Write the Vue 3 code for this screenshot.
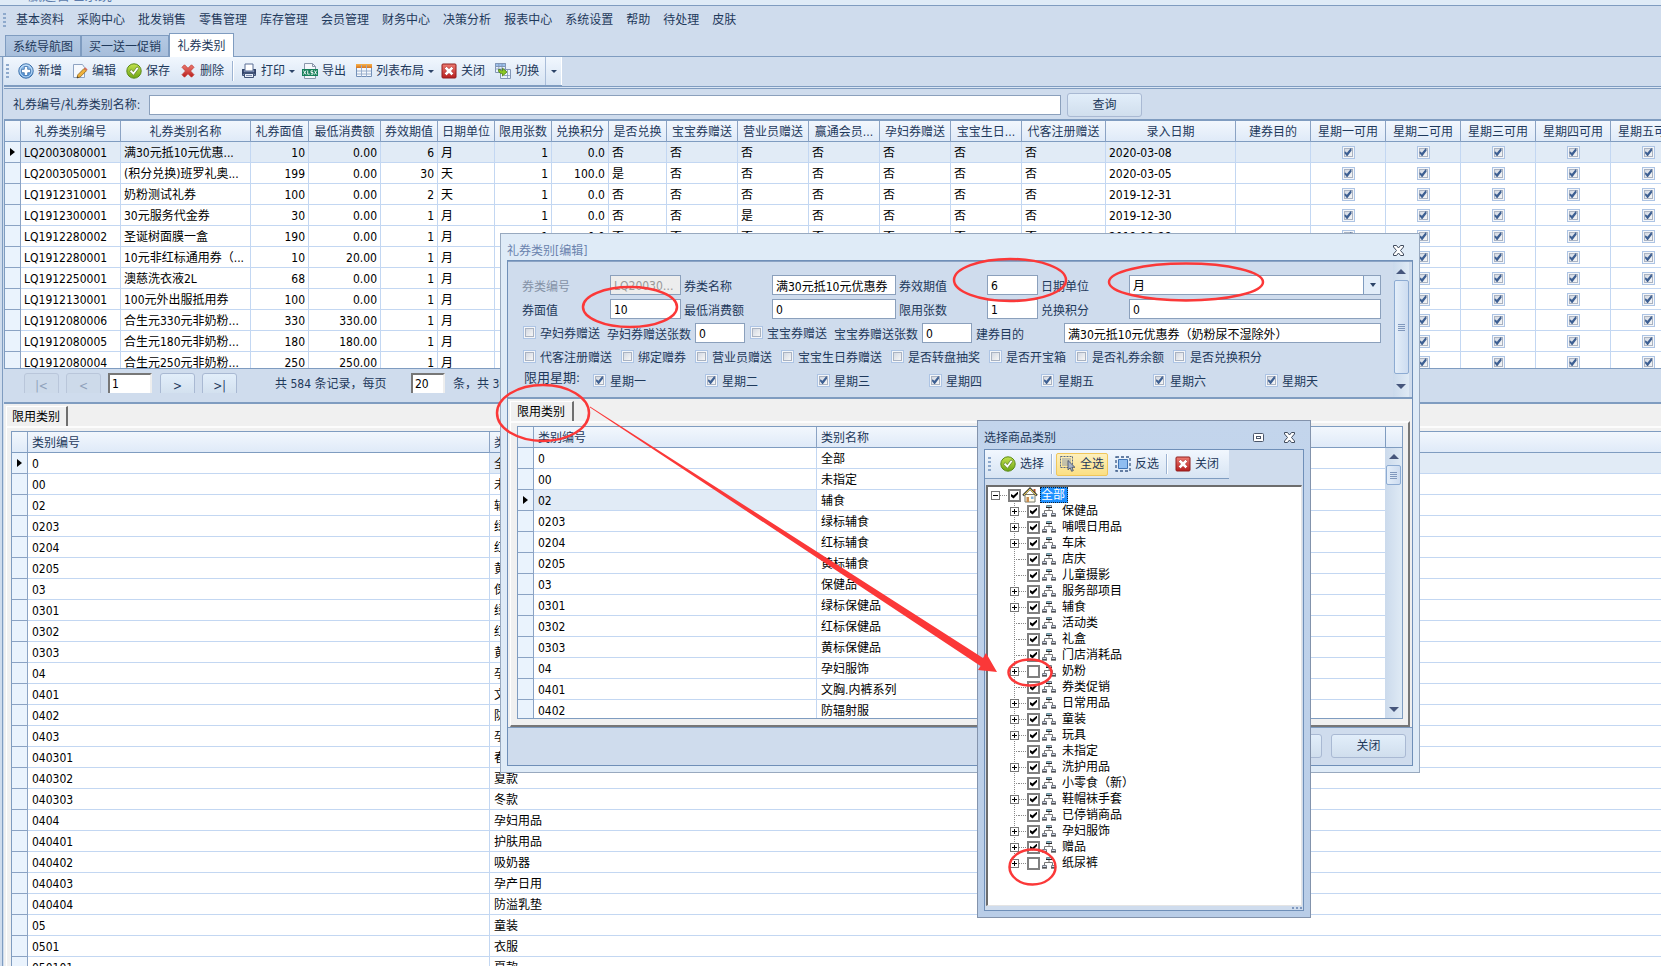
<script setup>
import { ref } from 'vue'

const menus = ['基本资料', '采购中心', '批发销售', '零售管理', '库存管理', '会员管理', '财务中心', '决策分析', '报表中心', '系统设置', '帮助', '待处理', '皮肤']

const columns = [
  { t: '礼券类别编号', w: 100 }, { t: '礼券类别名称', w: 130 }, { t: '礼券面值', w: 58, r: 1 },
  { t: '最低消费额', w: 72, r: 1 }, { t: '券效期值', w: 57, r: 1 }, { t: '日期单位', w: 57 },
  { t: '限用张数', w: 57, r: 1 }, { t: '兑换积分', w: 57, r: 1 }, { t: '是否兑换', w: 58 },
  { t: '宝宝券赠送', w: 71 }, { t: '营业员赠送', w: 71 }, { t: '赢通会员...', w: 71 },
  { t: '孕妇券赠送', w: 71 }, { t: '宝宝生日...', w: 71 }, { t: '代客注册赠送', w: 84 },
  { t: '录入日期', w: 130 }, { t: '建券目的', w: 75 }
]
const weekCols = ['一', '二', '三', '四', '五']

const mk = (id, name, value, min, span, unit, points, exch, staff, date) =>
  [id, name, value, min, span, unit, '1', points, exch, '否', staff, '否', '否', '否', '否', date, '']
const coupons = [
  mk('LQ2003080001', '满30元抵10元优惠...', '10', '0.00', '6', '月', '0.0', '否', '否', '2020-03-08'),
  mk('LQ2003050001', '(积分兑换)班罗礼奥...', '199', '0.00', '30', '天', '100.0', '是', '否', '2020-03-05'),
  mk('LQ1912310001', '奶粉测试礼券', '100', '0.00', '2', '天', '0.0', '否', '否', '2019-12-31'),
  mk('LQ1912300001', '30元服务代金券', '30', '0.00', '1', '月', '0.0', '否', '是', '2019-12-30'),
  mk('LQ1912280002', '圣诞树面膜一盒', '190', '0.00', '1', '月', '0.0', '否', '否', '2019-12-28'),
  mk('LQ1912280001', '10元非红标通用券（...', '10', '20.00', '1', '月', '0.0', '否', '否', '2019-12-28'),
  mk('LQ1912250001', '澳慈洗衣液2L', '68', '0.00', '1', '月', '0.0', '否', '否', '2019-12-25'),
  mk('LQ1912130001', '100元外出服抵用券', '100', '0.00', '1', '月', '0.0', '否', '否', '2019-12-13'),
  mk('LQ1912080006', '合生元330元非奶粉...', '330', '330.00', '1', '月', '0.0', '否', '否', '2019-12-08'),
  mk('LQ1912080005', '合生元180元非奶粉...', '180', '180.00', '1', '月', '0.0', '否', '否', '2019-12-08'),
  mk('LQ1912080004', '合生元250元非奶粉...', '250', '250.00', '1', '月', '0.0', '否', '否', '2019-12-08')
]

const categories = [
  ['0', '全部'], ['00', '未指定'], ['02', '辅食'], ['0203', '绿标辅食'], ['0204', '红标辅食'],
  ['0205', '黄标辅食'], ['03', '保健品'], ['0301', '绿标保健品'], ['0302', '红标保健品'],
  ['0303', '黄标保健品'], ['04', '孕妇服饰'], ['0401', '文胸.内裤系列'], ['0402', '防辐射服'],
  ['0403', '孕妇装'], ['040301', '春款'], ['040302', '夏款'], ['040303', '冬款'],
  ['0404', '孕妇用品'], ['040401', '护肤用品'], ['040402', '吸奶器'], ['040403', '孕产日用'],
  ['040404', '防溢乳垫'], ['05', '童装'], ['0501', '衣服'], ['050101', '夏款']
]

const flags = ['代客注册赠送', '绑定赠券', '营业员赠送', '宝宝生日券赠送', '是否转盘抽奖', '是否开宝箱', '是否礼券余额', '是否兑换积分']
const days = ['星期一', '星期二', '星期三', '星期四', '星期五', '星期六', '星期天']

const tree = ref([
  ['保健品', 1, 1], ['哺喂日用品', 1, 1], ['车床', 1, 1], ['店庆', 0, 1], ['儿童摄影', 0, 1],
  ['服务部项目', 1, 1], ['辅食', 1, 1], ['活动类', 0, 1], ['礼盒', 0, 1], ['门店消耗品', 0, 1],
  ['奶粉', 1, 0], ['券类促销', 0, 1], ['日常用品', 1, 1], ['童装', 1, 1], ['玩具', 1, 1],
  ['未指定', 0, 1], ['洗护用品', 1, 1], ['小零食（新）', 0, 1], ['鞋帽袜手套', 1, 1],
  ['已停销商品', 0, 1], ['孕妇服饰', 1, 1], ['赠品', 1, 1], ['纸尿裤', 1, 0]
].map(([name, kids, on]) => ({ name, kids: !!kids, on: !!on })))
</script>

<template>
  <div class="app">
    <svg class="defs" aria-hidden="true">
      <defs>
        <linearGradient id="gBlue" x1="0" y1="0" x2="0" y2="1"><stop offset="0" stop-color="#a9d0f5" /><stop offset="1" stop-color="#3f86cf" /></linearGradient>
        <linearGradient id="gGreen" x1="0" y1="0" x2="0" y2="1"><stop offset="0" stop-color="#c3e24e" /><stop offset="1" stop-color="#6fa514" /></linearGradient>
        <linearGradient id="gRed" x1="0" y1="0" x2="0" y2="1"><stop offset="0" stop-color="#ee7c72" /><stop offset="1" stop-color="#b81d1d" /></linearGradient>
        <linearGradient id="gOrange" x1="0" y1="0" x2="0" y2="1"><stop offset="0" stop-color="#f7b34c" /><stop offset="1" stop-color="#d9741c" /></linearGradient>
      </defs>
      <symbol id="i-add" viewBox="0 0 16 16"><circle cx="8" cy="8" r="7.2" fill="url(#gBlue)" stroke="#3a6ea8" /><circle cx="8" cy="8" r="6" fill="none" stroke="#d5e8fa" stroke-width=".8" /><path d="M6.3 3.5h3.4v2.8h2.8v3.4H9.7v2.8H6.3V9.700H3.500V6.300h2.800z" fill="#fff" stroke="#3a6ea8" stroke-width=".8" /></symbol>
      <symbol id="i-edit" viewBox="0 0 16 16"><path d="M1.500 1.500h9l2 3v10h-11z" fill="#f6f9fd" stroke="#8ea3c2" /><path d="M5 15l.8-3.200L12 5.500l2.500 2.200L8.200 14z" fill="#f0b23a" stroke="#8a6420" stroke-width=".8" /><path d="M12 5.500l1.200-1.200 2.400 2.200-1.100 1.200z" fill="#d86a5c" /><path d="M5 15l.5-1.800 1.300 1.200z" fill="#333" /></symbol>
      <symbol id="i-ok" viewBox="0 0 16 16"><circle cx="8" cy="8" r="7.2" fill="url(#gGreen)" stroke="#5a8a17" /><path d="M3.500 8.200l1.800-1.700 2 2.200 3.600-4.900 2 1.500-5.400 7.100z" fill="#fff" stroke="#5f7f2b" stroke-width=".8" /></symbol>
      <symbol id="i-del" viewBox="0 0 16 16"><path d="M2 4.300L4.500 1.800 8 5.300l3.500-3.500L14 4.300 10.500 8l3.500 3.700-2.500 2.500L8 10.700l-3.500 3.500L2 11.700 5.500 8z" fill="url(#gRed)" stroke="#c03830" stroke-width=".8" /></symbol>
      <symbol id="i-print" viewBox="0 0 16 16"><path d="M1.500 6.500h13v6h-13z" fill="#7d8eb0" stroke="#3f5275" /><path d="M4 1h8v7H4z" fill="#fff" stroke="#5a6f96" /><path d="M2 6v4h12V6" fill="none" stroke="#2c3e63" stroke-width="1.500" /><path d="M3.500 10.500h9v4h-9z" fill="#e8eef8" stroke="#3f5275" /><path d="M5 12.500h6" stroke="#7d8eb0" /></symbol>
      <symbol id="i-xls" viewBox="0 0 16 16"><path d="M2.500.5h8l3 3v12h-11z" fill="#f4f7fb" stroke="#8a97ab" /><path d="M10.500.5v3h3" fill="none" stroke="#8a97ab" /><path d="M0 6h16v7H0z" fill="#16805a" /><path d="M1.500 7.500l2.500 4m0-4l-2.500 4M5.700 7.500v3.700h2M11 7.800H9v1.700h2v1.700H8.800M12.400 7.500l2.300 4m0-4l-2.300 4" stroke="#fff" fill="none" stroke-width=".9" /></symbol>
      <symbol id="i-grid" viewBox="0 0 16 16"><path d="M.5 2.500h15v11H.5z" fill="#f5f8fc" stroke="#7390b8" /><path d="M0 1h16v4H0z" fill="url(#gOrange)" /><path d="M5.500 2v12M10.500 2v12M1 8h14M1 11h14" stroke="#93a9c9" stroke-width=".9" /></symbol>
      <symbol id="i-close" viewBox="0 0 16 16"><rect x="1" y="1" width="14" height="14" rx="1" fill="url(#gRed)" stroke="#8f1f1f" /><path d="M3.500 5.500l2-2L8 5.700l2.500-2.200 2 2L10.300 8l2.200 2.500-2 2L8 10.300l-2.500 2.200-2-2L5.700 8z" fill="#fff" stroke="#a53030" stroke-width=".5" /></symbol>
      <symbol id="i-switch" viewBox="0 0 16 16"><path d="M.5.5h10v9H.5zM5.500 6.500h10v9h-10z" fill="#eaf2fb" stroke="#8296b6" /><path d="M.5.5h10v3H.5z" fill="#9cc0ea" stroke="#8296b6" /><path d="M3.800 1v8M7 1v8M1 6h9M8.800 12.500h6M12.500 7v8" stroke="#8296b6" stroke-width=".8" /><path d="M3.500 6.500c0 3 1.500 4 4 4v2.500l4.500-4-4.500-3.800v2.600c-1.500 0-2.200-.3-2.200-1.300z" fill="#8cc824" stroke="#4d7d12" stroke-width=".8" /></symbol>
      <symbol id="i-all" viewBox="0 0 16 16"><path d="M.5.5h12v11H.5z" fill="none" stroke="#5b6b83" stroke-dasharray="2 1" /><path d="M2 3h9M2 5h9M2 7h9M2 9h7" stroke="#8b99ad" /><path d="M8 4.500v9.300l2.200-1.900 1.400 3.400 1.700-.7-1.400-3.300h3z" fill="#a9b4c6" stroke="#3c4962" stroke-width=".8" /></symbol>
      <symbol id="i-inv" viewBox="0 0 16 16"><path d="M1 1h14v14H1z" fill="none" stroke="#3b5a86" stroke-width="1.300" stroke-dasharray="3 2" /><path d="M3.500 3.500h9v9h-9z" fill="#8fbdf0" stroke="#3f74b5" /></symbol>
      <symbol id="i-home" viewBox="0 0 16 16"><path d="M11.500 2h2v4h-2z" fill="#b5532c" /><path d="M3 7.500h10v7.500H3z" fill="#fffbe8" stroke="#77786a" /><path d="M1 8.500L8 1.500l7 7" fill="none" stroke="#4a4a3c" stroke-width="2.200" /><path d="M2 8l6-6 6 6" fill="none" stroke="#e8c648" stroke-width="1" /><path d="M4.500 10h2.500v5H4.500z" fill="#c98c4c" /><path d="M9 9.500h2.500v2.500H9z" fill="#7fb0e0" /></symbol>
      <symbol id="i-org" viewBox="0 0 16 14"><path d="M8 3.500v3M3.500 10V6.500h8V10" fill="none" stroke="#777" /><path d="M5.500 1.500h5v2h-5zM1.500 9.500h4v2h-4zM10.500 9.500h4v2h-4z" fill="#d3dbe6" stroke="#777c88" /><path d="M5 3.500h6M1 12h5M10 12h5" stroke="#222" /><path d="M6 2h3" stroke="#4aa0b0" /></symbol>
      <symbol id="i-x" viewBox="0 0 11 11"><path d="M.5.5h3l2 2.500 2-2.500h3v1.500L7.500 5.500l3 3.500v1.500h-3l-2-2.500-2 2.500h-3V9l3-3.500-3-3.500z" fill="#fff" stroke="#3f4a5c" /></symbol>
      <symbol id="i-max" viewBox="0 0 12 10"><rect x=".5" y=".5" width="10" height="8" rx="1" fill="#fff" stroke="#4b566a" /><rect x="3.500" y="3.500" width="4" height="2" fill="#fff" stroke="#4b566a" /></symbol>
    </svg>

    <header class="titlebar"><span>赢通管理系统</span></header>
    <nav class="menu">
      <i class="grip"></i>
      <a v-for="m in menus" :key="m" href="#">{{ m }}</a>
    </nav>
    <div class="tabs">
      <button class="t1">系统导航图</button><button class="t2">买一送一促销</button><button class="t3 on">礼券类别</button>
    </div>

    <main class="body">
      <div class="toolbar main-bar">
        <i class="grip"></i>
        <button class="tb"><svg><use href="#i-add" /></svg>新增</button>
        <button class="tb"><svg><use href="#i-edit" /></svg>编辑</button>
        <button class="tb"><svg><use href="#i-ok" /></svg>保存</button>
        <button class="tb"><svg><use href="#i-del" /></svg>删除</button>
        <i class="sep"></i>
        <button class="tb caret"><svg><use href="#i-print" /></svg>打印</button>
        <button class="tb"><svg><use href="#i-xls" /></svg>导出</button>
        <button class="tb caret"><svg><use href="#i-grid" /></svg>列表布局</button>
        <button class="tb"><svg><use href="#i-close" /></svg>关闭</button>
        <button class="tb"><svg><use href="#i-switch" /></svg>切换</button>
        <button class="more" aria-label="更多"></button>
      </div>

      <form class="query" @submit.prevent>
        <label for="q">礼券编号/礼券类别名称:</label>
        <input id="q" type="text" class="box" />
        <button class="btn">查询</button>
      </form>

      <div class="grid-top">
        <table class="grid fixed">
          <colgroup>
            <col class="c-ind" />
            <col v-for="c in columns" :key="c.t" :style="{ width: c.w + 'px' }" />
            <col v-for="w in weekCols" :key="w" class="c-week" />
          </colgroup>
          <thead>
            <tr>
              <th></th>
              <th v-for="c in columns" :key="c.t">{{ c.t }}</th>
              <th v-for="w in weekCols" :key="w">星期{{ w }}可用</th>
            </tr>
          </thead>
          <tbody>
            <tr v-for="(row, i) in coupons" :key="row[0]" :class="{ sel: i === 0 }">
              <td class="ind"><i v-if="i === 0" class="cur"></i></td>
              <td v-for="(v, k) in row" :key="k" :class="{ r: columns[k].r }">{{ v }}</td>
              <td v-for="w in weekCols" :key="w" class="c"><input type="checkbox" class="ck" checked :aria-label="'星期' + w + '可用'" /></td>
            </tr>
          </tbody>
        </table>
      </div>

      <div class="pager">
        <div class="pager-in">
          <button class="btn" disabled>|&lt;</button>
          <button class="btn" disabled>&lt;</button>
          <input class="sunk" type="text" value="1" aria-label="页码" />
          <button class="btn">&gt;</button>
          <button class="btn">&gt;|</button>
          <span class="total">共 584 条记录，每页</span>
          <input class="sunk small" type="text" value="20" aria-label="每页条数" />
          <span>条，共 30 页</span>
        </div>
      </div>

      <section class="tabzone lower">
        <div class="strip"><button class="ptab">限用类别</button></div>
        <div class="page">
          <div class="frame">
            <table class="grid wide">
              <colgroup><col class="c-ind" /><col class="c-id" /><col /></colgroup>
              <thead><tr><th></th><th class="l">类别编号</th><th class="l">类别名称</th></tr></thead>
              <tbody>
                <tr v-for="(c, i) in categories" :key="c[0]">
                  <td class="ind"><i v-if="i === 0" class="cur"></i></td>
                  <td>{{ c[0] }}</td>
                  <td :class="{ hot: i === 0 }">{{ c[1] }}</td>
                </tr>
              </tbody>
            </table>
          </div>
        </div>
      </section>
    </main>

    <section class="dlg edit" role="dialog" aria-label="礼券类别[编辑]">
      <div class="cap"><span>礼券类别[编辑]</span><button class="cx" aria-label="关闭窗口"><svg width="11" height="11"><use href="#i-x" /></svg></button></div>
      <div class="inner">
        <div class="formwrap">
          <div class="form">
            <div class="row">
              <label class="f fa dis"><span>券类编号</span><input class="box" disabled value="LQ2003080001" /></label>
              <label class="f fb"><span>券类名称</span><input class="box" value="满30元抵10元优惠券" /></label>
              <label class="f fc"><span>券效期值</span><input class="box" value="6" /></label>
              <label class="f fd"><span>日期单位</span><select class="box"><option>月</option><option>天</option></select></label>
            </div>
            <div class="row">
              <label class="f fa"><span>券面值</span><input class="box" value="10" /></label>
              <label class="f fb"><span>最低消费额</span><input class="box" value="0" /></label>
              <label class="f fc"><span>限用张数</span><input class="box" value="1" /></label>
              <label class="f fd"><span>兑换积分</span><input class="box" value="0" /></label>
            </div>
            <div class="row tight">
              <label class="chk"><input type="checkbox" class="ck" />孕妇券赠送</label>
              <label class="n"><span>孕妇券赠送张数</span><input class="box" value="0" /></label>
              <label class="chk"><input type="checkbox" class="ck" />宝宝券赠送</label>
              <label class="n"><span>宝宝券赠送张数</span><input class="box" value="0" /></label>
              <label class="f fd"><span>建券目的</span><input class="box" value="满30元抵10元优惠券（奶粉尿不湿除外）" /></label>
            </div>
            <div class="row flags">
              <label v-for="f in flags" :key="f" class="chk"><input type="checkbox" class="ck" />{{ f }}</label>
            </div>
            <div class="row days">
              <span class="dl">限用星期:</span>
              <label v-for="d in days" :key="d" class="chk"><input type="checkbox" class="ck" checked />{{ d }}</label>
            </div>
          </div>
          <div class="sb"><i class="up"></i><b class="thumb tall"></b><i class="down"></i></div>
        </div>
        <div class="tabzone">
          <div class="strip"><button class="ptab">限用类别</button></div>
          <div class="page closed">
            <div class="frame split">
              <div class="clip">
                <table class="grid wide">
                  <colgroup><col class="c-ind" /><col class="c-id2" /><col /></colgroup>
                  <thead><tr><th></th><th class="l">类别编号</th><th class="l">类别名称</th></tr></thead>
                  <tbody>
                    <tr v-for="(c, i) in categories.slice(0, 13)" :key="c[0]">
                      <td class="ind"><i v-if="i === 2" class="cur"></i></td>
                      <td :class="{ hot: i === 2 }">{{ c[0] }}</td>
                      <td>{{ c[1] }}</td>
                    </tr>
                  </tbody>
                </table>
              </div>
              <div class="sbcol">
                <div class="sbhead"></div>
                <div class="sb"><i class="up"></i><b class="thumb"></b><i class="down"></i></div>
              </div>
            </div>
          </div>
        </div>
        <div class="foot"><button class="btn" aria-label="保存"></button><button class="btn">关闭</button></div>
      </div>
    </section>

    <section class="dlg pick" role="dialog" aria-label="选择商品类别">
      <div class="cap">
        <span>选择商品类别</span>
        <button class="cx mx" aria-label="最大化"><svg width="12" height="10"><use href="#i-max" /></svg></button>
        <button class="cx" aria-label="关闭窗口"><svg width="11" height="11"><use href="#i-x" /></svg></button>
      </div>
      <div class="inner">
        <div class="toolbar pick-bar">
          <i class="grip"></i>
          <button class="tb"><svg><use href="#i-ok" /></svg>选择</button>
          <i class="sep"></i>
          <button class="tb hot"><svg><use href="#i-all" /></svg>全选</button>
          <button class="tb"><svg><use href="#i-inv" /></svg>反选</button>
          <i class="sep"></i>
          <button class="tb"><svg><use href="#i-close" /></svg>关闭</button>
        </div>
        <div class="tree">
          <label class="root"><i class="ex"></i><i class="dash"></i><input type="checkbox" class="tk" checked /><svg width="16" height="16"><use href="#i-home" /></svg><span>全部</span></label>
          <ul>
            <li v-for="n in tree" :key="n.name">
              <label><i v-if="n.kids" class="ex plus"></i><i v-else class="ex none"></i><i class="dash"></i><input v-model="n.on" type="checkbox" class="tk" /><svg width="16" height="14"><use href="#i-org" /></svg><span>{{ n.name }}</span></label>
            </li>
          </ul>
        </div>
        <div class="status"><i></i><i></i><i></i></div>
      </div>
    </section>

    <svg class="marks" width="1661" height="966" viewBox="0 0 1661 966" aria-hidden="true">
      <g fill="none" stroke="#fb3838" stroke-width="2.500">
        <ellipse cx="630" cy="307" rx="47" ry="20" />
        <ellipse cx="1010" cy="280" rx="56" ry="21" />
        <ellipse cx="1186" cy="282" rx="77" ry="18.500" />
        <ellipse cx="543" cy="413" rx="46" ry="28" />
        <ellipse cx="1030" cy="672.500" rx="21.500" ry="13" />
        <ellipse cx="1032.500" cy="867" rx="23" ry="17.500" />
      </g>
      <path d="M590 406.500L983 658l3-5 11 19-19-2 2.500-4L590 407.500z" fill="#fb3838" />
    </svg>
  </div>
</template>

<style>
html, body { margin: 0; height: 100%; overflow: hidden; }
#app { height: 100%; }
</style>

<style scoped>
.app { position: relative; display: flex; flex-direction: column; height: 100vh; overflow: hidden; background: #cfdced; color: #1e395b; font: 12px/16px "DejaVu Sans Condensed", "Noto Sans CJK SC", sans-serif; white-space: nowrap; }
.app *, .app *::before, .app *::after { box-sizing: border-box; }
button, input, select { font: inherit; color: inherit; margin: 0; padding: 0; border: 0; background: none; border-radius: 0; outline: 0; }
i, b { display: block; flex: none; font-style: normal; }
.defs { position: absolute; width: 0; height: 0; }
.titlebar { flex: none; display: flex; align-items: flex-end; height: 6px; overflow: hidden; background: #dfebf7; border-bottom: 1px solid #7f9cc0; padding: 0 0 2px 28px; font-size: 14px; color: #5d7bab; }
.titlebar span { line-height: 16px; }
.grip { width: 3px; height: 14px; background: repeating-linear-gradient(#8ea9cc 0 2px, transparent 2px 4px); }
.menu { flex: none; display: flex; align-items: center; height: 27px; padding-left: 3px; }
.menu a { color: #1e395b; text-decoration: none; margin-left: 13px; }
.menu .grip + a { margin-left: 10px; }
.tabs { flex: none; display: flex; align-items: flex-end; height: 24px; padding-left: 5px; border-bottom: 1px solid #7f9cc0; }
.tabs button { height: 21px; padding-top: 2px; border: 1px solid #7f9cc0; border-bottom: 0; background: linear-gradient(#b4c9e3, #a7bedb); text-align: center; }
.tabs .t1 { width: 76px; }
.tabs .t2 { width: 88px; }
.tabs .t3 { width: 65px; height: 24px; margin-bottom: -1px; padding-top: 0; background: #fff; }

.body { flex: 1; min-height: 0; display: flex; flex-direction: column; margin-left: 2px; border-left: 1px solid #7f9cc0; padding-left: 1px; }
.toolbar { flex: none; display: flex; align-items: center; align-self: flex-start; height: 29px; padding-left: 2px; border-bottom: 1px solid #7f9cc0; background: linear-gradient(#f1f7fe, #d7e4f3); }
.tb { display: flex; align-items: center; gap: 4px; height: 23px; padding: 0 4px; }
.tb svg { width: 16px; height: 16px; flex: none; }
.main-bar .tb { margin-right: 2px; }
.main-bar .grip + .tb { margin-left: 5px; }
.main-bar .tb.caret { padding-right: 2px; margin-right: 1px; }
.sep { width: 2px; height: 20px; background: linear-gradient(90deg, #9cb3d2 50%, #fff 50%); }
.caret::after, .more::after { content: ""; border: 3px solid transparent; border-top-color: #2c4468; border-bottom: 0; }
.main-bar .sep { margin: 0 3px 0 2px; }
.more { align-self: stretch; width: 17px; border-left: 1px solid #a9bdd9; border-right: 1px solid #fff; display: flex; align-items: center; justify-content: center; }
.box { height: 20px; border: 1px solid #8ba0bc; background: #fff; color: #000; padding: 1px 3px 0; min-width: 0; }
.btn { height: 24px; border: 1px solid #a9b9d3; border-radius: 3px; background: linear-gradient(#e2eefa, #d0deed); text-align: center; }
.query { flex: none; display: flex; align-items: center; height: 33px; padding: 3px 0 0 9px; border-top: 1px solid #7f9cc0; box-shadow: inset 0 1px 0 #dbe6f4, inset 0 2px 0 #7f9cc0; }
.query label { width: 136px; }
.query .box { width: 912px; }
.query .btn { width: 75px; margin-left: 6px; }

.grid-top { flex: none; height: 250px; overflow: hidden; border: 1px solid #7f9cc0; border-top-width: 2px; border-right: 0; background: #fff; }
.grid { width: 100%; border-collapse: separate; border-spacing: 0; table-layout: fixed; background: #fff; color: #000; }
.grid.fixed { width: 1681px; }
.c-ind { width: 16px; }
.c-week { width: 75px; }
.c-id { width: 462px; }
.c-id2 { width: 283px; }
.grid th { height: 21px; padding: 2px 0 0; font-weight: normal; color: #1e395b; text-align: center; background: linear-gradient(#f2f7fd, #dfeaf8); border-right: 1px solid #8ba3c4; border-bottom: 1px solid #7f9cc0; overflow: hidden; }
.grid th.l { text-align: left; padding-left: 4px; }
.grid th.l:last-child { border-right: 0; }
.grid td { height: 21px; padding: 3px 3px 1px; line-height: 16px; border-right: 1px solid #c3d7f2; border-bottom: 1px solid #c3d7f2; overflow: hidden; }
.grid.wide td { padding-left: 4px; }
.grid td:last-child { border-right: 0; }
.grid td.r { text-align: right; }
.grid td.c { text-align: center; line-height: 0; padding: 0; }
.grid td.ind { padding: 0; background: #eaf3fd; border-color: #8ba3c4; }
.grid .sel td:not(.ind), .grid td.hot { background: #e1ebf6; }
.cur { margin: 0 auto; width: 5px; height: 8px; background: #000; clip-path: polygon(0 0, 100% 50%, 0 100%); }

.ck { appearance: none; flex: none; position: relative; width: 13px; height: 13px; border: 1px solid #adc4e4; background: #f4f6f9; }
.ck::before { content: ""; position: absolute; inset: 1px; border: 1px solid #aab3c2; background: linear-gradient(135deg, #d3d9e3, #f6f6f6); }
.ck:checked::after { content: ""; position: absolute; inset: 1px; background: #3d5f92; clip-path: polygon(15% 42%, 38% 58%, 84% 2%, 90% 32%, 44% 95%, 36% 95%, 10% 62%); }

.pager { flex: none; height: 35px; border-bottom: 2px solid #7f9cc0; }
.pager-in { display: flex; align-items: flex-start; height: 24px; padding: 4px 0 0 20px; overflow: hidden; line-height: 22px; }
.pager .btn { width: 35px; height: 25px; margin-right: 7px; flex: none; }
.pager .btn:disabled { color: #8fa1ba; border-color: #b9c6da; background: #cddaea; }
.sunk { width: 44px; height: 22px; margin-right: 8px; padding: 0 2px; color: #000; background: #fff; border: 2px solid; border-color: #777 #eee #eee #777; }
.total { margin-left: 31px; width: 136px; }
.sunk.small { width: 34px; }

.tabzone { flex: 1; min-height: 0; display: flex; flex-direction: column; background: #f0f0f0; color: #000; padding: 2px 2px 0; }
.strip { flex: none; display: flex; height: 20px; }
.ptab { width: 62px; text-align: left; padding-left: 5px; border-top: 1px solid #fff; border-left: 1px solid #fff; border-right: 2px solid #6f6f6f; }
.page { flex: 1; min-height: 0; display: flex; border-top: 2px solid #fcfcfc; border-left: 1px solid #fff; padding: 3px 0 0 4px; }
.page.closed { border-right: 2px solid #777; border-bottom: 2px solid #777; padding: 3px 5px 6px 6px; }
.lower { padding-right: 0; }
.frame { flex: 1; min-width: 0; overflow: hidden; border: 1px solid #7f9cc0; border-right: 0; background: #fff; }
.lower .frame { border-bottom: 0; }
.frame.split { display: flex; border-right: 1px solid #7f9cc0; }
.clip { flex: 1; min-width: 0; overflow: hidden; }
.sbcol { flex: none; width: 17px; display: flex; flex-direction: column; }
.sbhead { height: 21px; flex: none; border-left: 1px solid #7f9cc0; border-bottom: 1px solid #7f9cc0; background: linear-gradient(#f2f7fd, #dfeaf8); }
.sb { flex: 1; display: flex; flex-direction: column; align-items: center; padding: 5px 0 4px; background: linear-gradient(90deg, #cbdaec, #dfeaf5); }
.up { margin: 1px 0 6px; border: 5px solid transparent; border-top: 0; border-bottom-color: #46567c; }
.down { margin: auto 0 2px; border: 5px solid transparent; border-bottom: 0; border-top-color: #46567c; }
.thumb { width: 15px; height: 20px; border: 1px solid #8dabd2; border-radius: 2px; background: linear-gradient(90deg, #e4eef9, #cddcf0); display: flex; align-items: center; justify-content: center; }
.thumb::before { content: ""; width: 7px; height: 7px; background: repeating-linear-gradient(#8098bd 0 1px, transparent 1px 2px); }
.thumb.tall { height: 94px; }

.dlg { position: absolute; display: flex; flex-direction: column; border: 1px solid #98a9bf; padding: 0 6px 6px; }
.cap { flex: none; display: flex; align-items: center; }
.cap span { flex: 1; }
.cx { line-height: 0; }
.inner { flex: 1; min-height: 0; display: flex; flex-direction: column; border: 1px solid #6f8fb8; background: #cfdced; }
.edit { left: 500px; top: 233px; width: 920px; height: 540px; background: #dfebf7; }
.edit .cap { height: 26px; padding: 7px 9px 0 0; color: #6b83ae; }
.formwrap { flex: none; display: flex; height: 138px; border-bottom: 2px solid #7f9cc0; border-top: 1px solid #8ba3c4; padding-right: 3px; }
.form { flex: 1; min-width: 0; padding: 13px 12px 0 14px; }
.row { display: flex; align-items: center; gap: 3px; height: 20px; margin-bottom: 4px; }
.f { display: flex; align-items: center; }
.f span { flex: none; width: 88px; padding-top: 3px; }
.f .box { flex: 1; text-overflow: ellipsis; }
.fa { width: 159px; } .fb { width: 212px; } .fc { width: 139px; } .fd { flex: 1; }
.dis { color: #8592a6; }
.dis .box { background: #ededed; color: #999; }
select.box { appearance: none; background: linear-gradient(#7f9cc0, #7f9cc0) right 16px top / 1px 100% no-repeat, linear-gradient(90deg, #fff calc(100% - 16px), #e2edf9 0); }
.fd { position: relative; }
.fd:has(select)::after { content: ""; position: absolute; right: 5px; top: 8px; border: 3px solid transparent; border-top: 4px solid #2c4468; border-bottom: 0; pointer-events: none; }
.chk { display: flex; align-items: center; gap: 4px; padding-top: 2px; line-height: 18px; }
.chk .ck { margin-top: -4px; }
.tight { gap: 4px; }
.tight .chk { padding-left: 1px; margin-right: 3px; }
.n { display: flex; align-items: center; gap: 4px; }
.n span { padding-top: 3px; }
.n .box { width: 50px; }
.flags { gap: 9px; padding-left: 1px; }
.days { gap: 0; }
.dl { width: 71px; padding-left: 2px; margin-top: -6px; font-size: 13px; }
.days .chk { width: 112px; }
.formwrap .sb { flex: none; width: 16px; padding: 6px 0; }
.edit .ptab { width: 64px; padding-left: 6px; }
.foot { flex: none; display: flex; justify-content: flex-end; gap: 9px; height: 38px; padding: 6px 6px 0 0; border-top: 1px solid #7f9cc0; }
.foot .btn { width: 75px; }

.pick { left: 977px; top: 420px; width: 334px; height: 498px; border-color: #8393ac; background: linear-gradient(#c3d5ec, #b9cde7); }
.pick .cap { height: 28px; padding: 5px 9px 0 0; }
.pick .mx { margin-right: 19px; }
.pick-bar { width: 244px; padding-left: 3px; }
.pick-bar .grip + .tb { margin-left: 5px; }
.pick-bar .sep { margin: 0 3px; }
.pick-bar .tb.hot { border: 1px solid #f0c65a; border-radius: 2px; background: linear-gradient(#fdf0bd, #fbdf83); padding: 0 3px; margin-right: 3px; }
.tree { flex: 1; min-height: 0; margin: 6px 1px 0; padding: 0 0 0 3px; background: #fff; color: #000; border: 1px solid #e4e4e4; border-top: 2px solid #6d6d6d; border-left: 2px solid #6d6d6d; overflow: hidden; }
.tree label { display: flex; align-items: center; height: 16px; }
.tree svg { flex: none; }
.ex { position: relative; width: 9px; height: 9px; border: 1px solid #777; background: #fff; }
.ex::before { content: ""; position: absolute; left: 1px; right: 1px; top: 3px; height: 1px; background: #000; }
.plus::after { content: ""; position: absolute; top: 1px; bottom: 1px; left: 3px; width: 1px; background: #000; }
.ex.none { border: 0; background: none; }
.ex.none::before { left: 4px; right: 0; top: 4px; background: repeating-linear-gradient(90deg, #888 0 1px, transparent 1px 2px); }
.dash { width: 8px; height: 1px; background: repeating-linear-gradient(90deg, #888 0 1px, transparent 1px 2px); }
.tk { appearance: none; flex: none; position: relative; width: 13px; height: 13px; border: 2px solid #808080; background: #fff; }
.tk:checked::after { content: ""; position: absolute; inset: 1px; background: #000; clip-path: polygon(0 35%, 36% 58%, 100% 0, 100% 36%, 36% 100%, 0 70%); }
.root .tk { margin-right: 1px; }
.root span { margin-left: 2px; padding: 0 3px 0 1px; background: #1e90ff; color: #fff; outline: 1px dotted #123; outline-offset: -1px; }
.tree ul { list-style: none; margin: 0; padding: 0 0 0 19px; background: repeating-linear-gradient(#888 0 1px, transparent 1px 2px) 23px 0 / 1px 360px no-repeat; }
.tree li .tk { margin: 0 1px 0 0; }
.tree li span { margin-left: 5px; }
.status { flex: none; display: flex; justify-content: flex-end; align-items: center; gap: 2px; height: 4px; padding-right: 1px; }
.status i { width: 2px; height: 2px; background: #7f98bf; }
.marks { position: absolute; left: 0; top: 0; pointer-events: none; }
</style>
